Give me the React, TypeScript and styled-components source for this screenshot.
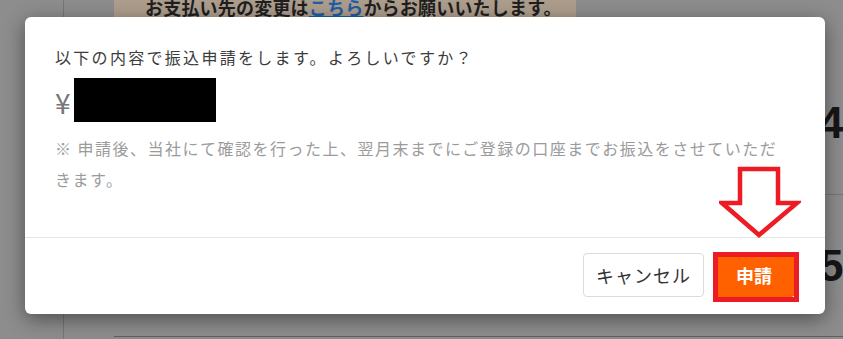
import styled, { createGlobalStyle } from "styled-components"

const GlobalStyle = createGlobalStyle`
  html, body {
    margin: 0;
    padding: 0;
    background: #8d8d8d;
  }
  * {
    box-sizing: border-box;
  }
`

const jp = `"Noto Sans CJK JP", "Noto Sans", sans-serif`

// dimmed page behind the modal
const Page = styled.div`
  position: relative;
  width: 843px;
  height: 339px;
  overflow: hidden;
  display: flex;
  background: #8d8d8d;
  font-family: ${jp};
`

const SideNav = styled.div`
  width: 64px;
  flex-shrink: 0;
  border-right: 1px solid #767676;
`

const Content = styled.div`
  flex: 1;
  display: flex;
  flex-direction: column;
  padding-left: 50px;
`

const Banner = styled.div`
  width: 462px;
  height: 30px;
  margin-top: -8px;
  padding-left: 31px;
  background: #ad9d8d;
  color: #1f1f1f;
  font-size: 18px;
  font-weight: 700;
  line-height: 30px;
  letter-spacing: 0.2px;
  white-space: nowrap;
  a {
    color: #1d5ea6;
    text-decoration: underline;
  }
`

const Summary = styled.div`
  display: flex;
  flex-direction: column;
  border-bottom: 1px solid #5f5f5f;
`

const SummaryRow = styled.div<{ $h: number; $pt: number; $last?: boolean }>`
  display: grid;
  grid-template-columns: 1fr 24px;
  align-items: center;
  height: ${(p) => p.$h}px;
  padding-top: ${(p) => p.$pt}px;
  border-bottom: ${(p) => (p.$last ? "none" : "1px solid #777")};
`

const BigNum = styled.div`
  font-family: "Liberation Sans", Arial, sans-serif;
  font-size: 44px;
  font-weight: 700;
  color: #161616;
  white-space: nowrap;
`

// modal
const Overlay = styled.div`
  position: absolute;
  inset: 0;
  display: flex;
  align-items: flex-start;
  padding: 17px 0 0 25px;
`

const Modal = styled.div`
  position: relative;
  width: 800px;
  background: #fff;
  border-radius: 6px;
  box-shadow: 0 5px 20px rgba(0, 0, 0, 0.45);
  font-family: ${jp};
`

const Body = styled.div`
  padding: 30px 30px 42px;
`

const Title = styled.p`
  margin: 0;
  font-size: 16px;
  line-height: 20px;
  letter-spacing: 2.3px;
  color: #3c3c3c;
`

const Amount = styled.div`
  display: flex;
  align-items: center;
  gap: 3px;
  margin-top: 11px;
  height: 44px;
`

const Yen = styled.span`
  font-size: 28px;
  color: #777;
  line-height: 1;
  margin-top: 4px;
`

const Masked = styled.span`
  display: block;
  width: 142px;
  height: 44px;
  background: #000;
`

const Note = styled.p`
  margin: 11px 0 0;
  padding-right: 14px;
  font-size: 16px;
  line-height: 31px;
  letter-spacing: 1.5px;
  color: #9b9b9b;
`

const Footer = styled.div`
  display: flex;
  justify-content: flex-end;
  align-items: center;
  gap: 9px;
  padding: 15px 30px 17px;
  border-top: 1px solid #e5e5e5;
`

const Button = styled.button<{ $primary?: boolean }>`
  height: 44px;
  padding: 0 ${(p) => (p.$primary ? "22px" : "12px")};
  border-radius: 4px;
  border: 1px solid ${(p) => (p.$primary ? "#ff6100" : "#dcdcdc")};
  background: ${(p) => (p.$primary ? "#ff6100" : "#fff")};
  color: ${(p) => (p.$primary ? "#fff" : "#333")};
  font-family: ${jp};
  font-size: 18px;
  font-weight: ${(p) => (p.$primary ? 700 : 400)};
  letter-spacing: ${(p) => (p.$primary ? "0" : "1px")};
  cursor: pointer;
`

const Highlight = styled.span`
  position: relative;
  display: inline-flex;
`

// red annotation box over the submit button
const HighlightBox = styled.span`
  position: absolute;
  top: -1px;
  left: 0;
  right: -4px;
  bottom: -5px;
  border: 5px solid #ed1c24;
  pointer-events: none;
`

const Arrow = styled.svg`
  position: absolute;
  left: 694px;
  top: 149px;
  width: 82px;
  height: 72px;
  pointer-events: none;
`

export default function App() {
  return (
    <>
      <GlobalStyle />
      <Page>
        <SideNav />
        <Content>
          <Banner>
            お支払い先の変更は<a>こちら</a>からお願いいたします。
          </Banner>
          <Summary>
            <SummaryRow $h={173} $pt={30}>
              <span />
              <BigNum>4,</BigNum>
            </SummaryRow>
            <SummaryRow $h={141} $pt={0} $last>
              <span />
              <BigNum>5,</BigNum>
            </SummaryRow>
          </Summary>
        </Content>

        <Overlay>
          <Modal>
            <Body>
              <Title>以下の内容で振込申請をします。よろしいですか？</Title>
              <Amount>
                <Yen>¥</Yen>
                <Masked />
              </Amount>
              <Note>
                ※ 申請後、当社にて確認を行った上、翌月末までにご登録の口座までお振込をさせていただきます。
              </Note>
            </Body>
            <Footer>
              <Button>キャンセル</Button>
              <Highlight>
                <Button $primary>申請</Button>
                <HighlightBox />
              </Highlight>
            </Footer>
            <Arrow viewBox="0 0 82 72">
              <polygon
                points="21,3 59,3 59,37 78,37 40,69 3,37 21,37"
                fill="none"
                stroke="#ed1c24"
                strokeWidth="4.5"
                strokeLinejoin="miter"
              />
            </Arrow>
          </Modal>
        </Overlay>
      </Page>
    </>
  )
}
